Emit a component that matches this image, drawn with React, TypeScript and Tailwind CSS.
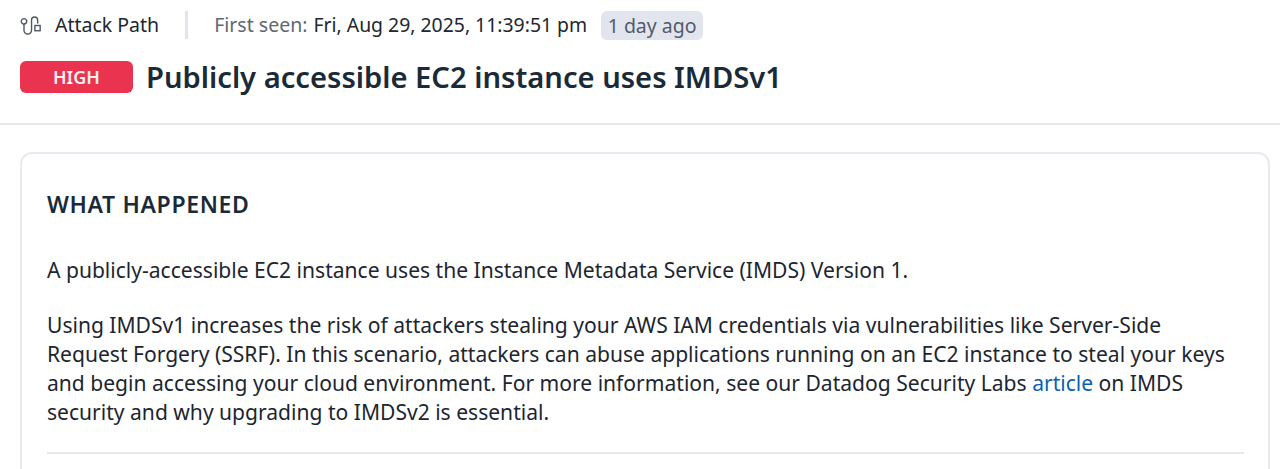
function AttackPathIcon() {
  return (
    <svg width="21" height="21" viewBox="0 0 20 20" fill="none" stroke="#4b5563" strokeWidth="1.3">
      <circle cx="3.8" cy="6" r="2.6" />
      <path d="M3.8 8.6V14.5a3.6 3.6 0 0 0 7.2 0V4.8a2.9 2.9 0 0 1 5.8 0V8" />
      <rect x="14.2" y="10" width="5" height="5" />
    </svg>
  );
}

export default function App() {
  return (
    <div className="h-[469px] overflow-hidden bg-white font-['Noto_Sans',sans-serif] text-[#1b2733]">
      <header className="h-[125px] border-b-2 border-[#e6e8f0] pl-5 pt-[10px]">
        <div className="flex h-[30px] items-center">
          <AttackPathIcon />
          <span className="ml-[14px] text-[19.5px] text-[#20272f]">Attack Path</span>
          <div className="ml-[26px] h-[28px] w-[3px] bg-[#e1e4ec]" />
          <span className="ml-[26px] text-[19.5px] text-[#5f6772]">First seen:</span>
          <span className="ml-[6px] text-[19.4px] text-[#20272f]">Fri, Aug 29, 2025, 11:39:51 pm</span>
          <span className="ml-[14px] rounded-md bg-[#e2e5ee] px-[6.5px] text-[19.5px] leading-[29px] text-[#515b6b]">
            1 day ago
          </span>
        </div>
        <div className="mt-[17px] flex items-center">
          <span className="flex h-[32px] w-[113px] items-center justify-center rounded-md bg-[#ea334e] text-[18px] font-semibold text-[#fdf0f2]">
            HIGH
          </span>
          <h1 className="ml-[13px] text-[29.15px] leading-[40px] font-semibold text-[#1a2a38]">
            Publicly accessible EC2 instance uses IMDSv1
          </h1>
        </div>
      </header>
      <div className="pl-5 pr-[10px] pt-[27px]">
        <section className="h-[400px] rounded-xl border-2 border-[#e8eaf1] pl-[25px] pr-6 pt-[34px]">
          <h2 className="text-[23px] leading-[32px] font-semibold tracking-[0.65px] text-[#1a2a38]">WHAT HAPPENED</h2>
          <p className="mt-[35px] text-[21.07px] leading-[29.1px] text-[#1c2530]">
            A publicly-accessible EC2 instance uses the Instance Metadata Service (IMDS) Version 1.
          </p>
          <p className="mt-[26px] text-[21.07px] leading-[29.1px] text-[#1c2530]">
            Using IMDSv1 increases the risk of attackers stealing your AWS IAM credentials via vulnerabilities like Server-Side Request Forgery (SSRF). In this scenario, attackers can abuse applications running on an EC2 instance to steal your keys and begin accessing your cloud environment. For more information, see our Datadog Security Labs{" "}
            <a href="#" className="text-[#0a5fb4]">article</a> on IMDS security and why upgrading to IMDSv2 is essential.
          </p>
          <div className="mt-[26px] h-[2px] bg-[#e6e8f0]" />
        </section>
      </div>
    </div>
  );
}
